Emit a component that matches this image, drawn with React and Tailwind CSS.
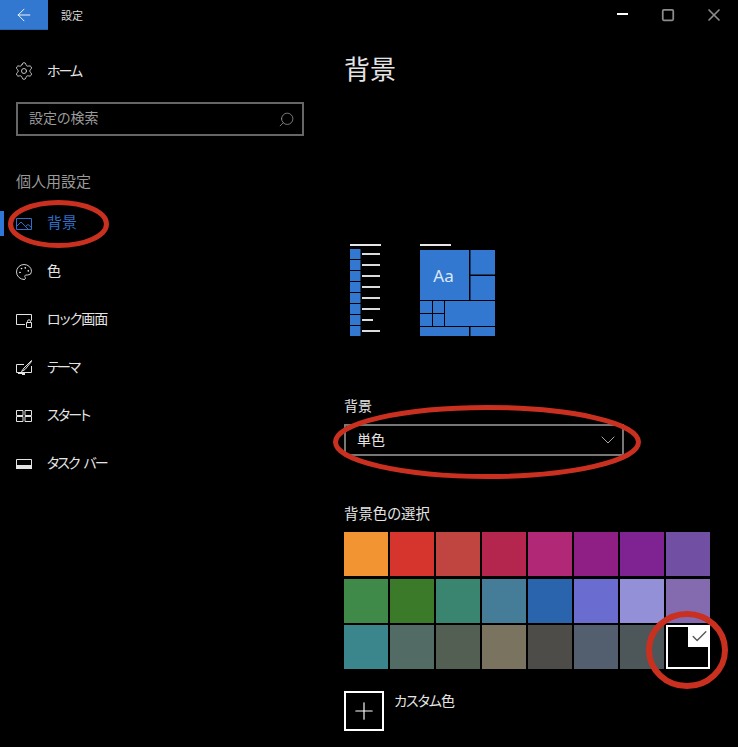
import { ArrowLeft, Settings, Search, Palette, ChevronDown, Plus, Check, X, Square } from "lucide-react";

const font = "font-['Noto_Sans_CJK_JP','Noto_Sans',sans-serif] [font-feature-settings:'palt']";

function ImageIcon() {
  return (
    <svg width="16" height="16" viewBox="0 0 16 16" fill="none" stroke="currentColor" strokeWidth="1">
      <path d="M.5 2.5h15v11H.5z" />
      <path d="M.5 10.5 5 6l7.5 7.5M9.5 10.5l2.5-2 3.5 3" />
    </svg>
  );
}

function LockIcon() {
  return (
    <svg width="16" height="16" viewBox="0 0 16 16" fill="none" stroke="currentColor" strokeWidth="1">
      <path d="M9 12.5H.5v-10h15v6" />
      <path d="M10.5 10.5h5v5h-5zM11.5 10.5V9.3a1.5 1.5 0 0 1 3 0v1.2" />
    </svg>
  );
}

function ThemeIcon() {
  return (
    <svg width="16" height="16" viewBox="0 0 16 16" fill="none" stroke="currentColor" strokeWidth="1">
      <path d="M8 4.5H.5v8h15V6" />
      <path d="M15.5 .5 8 8l-2.5 3.5L9 9.5l6.5-8z" />
      <path d="M2 12h7v3H6v-1H2z" fill="currentColor" stroke="none" />
    </svg>
  );
}

function StartIcon() {
  return (
    <svg width="16" height="16" viewBox="0 0 16 16" fill="none" stroke="currentColor" strokeWidth="1">
      <path d="M.5 2.5h6.5v5H.5zM9 2.5h6.5v5H9zM.5 8.5h6.5v5H.5zM9 8.5h6.5v5H9z" />
    </svg>
  );
}

function TaskbarIcon() {
  return (
    <svg width="16" height="16" viewBox="0 0 16 16" fill="none" stroke="currentColor" strokeWidth="1">
      <path d="M.5 3.5h15v8.5H.5z" />
      <path d="M0 9h16v4H0z" fill="currentColor" stroke="none" />
    </svg>
  );
}

const navItems = [
  { label: "背景", icon: <ImageIcon />, active: true, text: "text-[15px]" },
  { label: "色", icon: <Palette size={18} strokeWidth={1.2} className="-ml-px" />, text: "text-[14px]" },
  { label: "ロック画面", icon: <LockIcon />, text: "text-[14px] tracking-[-1px]" },
  { label: "テーマ", icon: <ThemeIcon />, text: "text-[14px] tracking-[-2.5px]" },
  { label: "スタート", icon: <StartIcon />, text: "text-[14px] tracking-[-1.75px]" },
  { label: "タスク バー", icon: <TaskbarIcon />, text: "text-[14px] tracking-[-2px] [word-spacing:4px]" },
];

const swatches = [
  "bg-[#f39433]", "bg-[#d6352e]", "bg-[#c04540]", "bg-[#b5264f]", "bg-[#b02876]", "bg-[#8f1f85]", "bg-[#7f2393]", "bg-[#7150a3]",
  "bg-[#3f8a48]", "bg-[#3a7a28]", "bg-[#3a8570]", "bg-[#457d99]", "bg-[#2a64ad]", "bg-[#6a6dcf]", "bg-[#9390d8]", "bg-[#846bb0]",
  "bg-[#3b858c]", "bg-[#526b64]", "bg-[#545f54]", "bg-[#7a735f]", "bg-[#4e4c48]", "bg-[#535f6e]", "bg-[#4d5658]",
];

function Preview() {
  const listRows = [0, 1, 2, 3, 4, 5, 6, 7];
  return (
    <svg width="151" height="92" viewBox="0 0 151 92" className="block">
      <rect x="6" y="0" width="31" height="2" fill="#e6e6e6" />
      <rect x="76" y="0" width="31" height="2" fill="#e6e6e6" />
      {listRows.map((i) => (
        <g key={i}>
          <rect x="6" y={5 + i * 11} width="10.5" height="10" fill="#3277d0" />
          <rect x="18" y={9 + i * 11} width={i === 6 ? 11 : 18} height="2" fill="#dcdcdc" />
        </g>
      ))}
      <g fill="#3277d0">
        <rect x="76" y="6" width="49" height="50" />
        <rect x="126.5" y="6" width="24.5" height="24.5" />
        <rect x="126.5" y="32" width="24.5" height="24" />
        <rect x="76" y="57" width="12" height="12" />
        <rect x="89" y="57" width="11" height="12" />
        <rect x="76" y="70" width="12" height="12" />
        <rect x="89" y="70" width="11" height="12" />
        <rect x="101" y="57" width="50" height="25" />
        <rect x="76" y="83" width="49" height="9" />
        <rect x="126.5" y="83" width="24.5" height="9" />
      </g>
      <text x="99.5" y="38" textAnchor="middle" fontSize="17" fill="#dbe8f8" fontFamily="'Noto Sans', sans-serif">Aa</text>
    </svg>
  );
}

export default function App() {
  return (
    <div className={`relative h-[747px] w-[738px] overflow-hidden bg-black text-[#e4e4e4] ${font}`}>
      {/* Title bar */}
      <div className="flex h-[30px] items-center">
        <div className="flex h-[30px] w-12 items-center justify-center border-b border-[#2a62ad] bg-[#3277d0]">
          <ArrowLeft size={20} strokeWidth={1.1} className="text-white" />
        </div>
        <span className="ml-[13px] text-[11px] text-[#d8d8d8]">設定</span>
        <div className="ml-auto mr-px flex text-[#8c8c8c]">
          <div className="flex h-[30px] w-[46px] items-center justify-center">
            <div className="mb-0.5 h-0.5 w-[11px] bg-white" />
          </div>
          <div className="flex h-[30px] w-[46px] items-center justify-center"><Square size={14} strokeWidth={3} /></div>
          <div className="flex h-[30px] w-[46px] items-center justify-center"><X size={20} strokeWidth={2} /></div>
        </div>
      </div>

      <div className="flex">
        {/* Sidebar */}
        <aside className="w-[320px] shrink-0">
          <div className="mt-[17px] flex h-12 items-center pl-4">
            <Settings size={20} strokeWidth={1} className="-ml-0.5 shrink-0" />
            <span className="-mt-0.5 ml-[13px] text-[14px] tracking-[-2px]">ホーム</span>
          </div>
          <div className="ml-4 mt-[7px] flex h-[34px] w-[288px] items-center justify-between border-2 border-[#666666] pl-[11px] pr-[7px]">
            <span className="-mt-1 text-[14px] text-[#9a9a9a]">設定の検索</span>
            <Search size={17} strokeWidth={1.1} className="-scale-x-100 text-[#999999]" />
          </div>
          <div className="ml-4 mt-[34px] h-[22px] text-[15px] leading-[22px] text-[#9a9a9a]">個人用設定</div>
          <nav className="mt-2">
            {navItems.map((item) => (
              <div key={item.label} className={`relative flex h-12 items-center pl-4 ${item.active ? "text-[#2f6fc4]" : ""}`}>
                {item.active && <div className="absolute left-0 top-[11px] h-[25px] w-1 bg-[#2f78d8]" />}
                <span className="w-4 shrink-0">{item.icon}</span>
                <span className={`-mt-1 ml-[15px] whitespace-pre ${item.text}`}>{item.label}</span>
              </div>
            ))}
          </nav>
        </aside>

        {/* Main */}
        <main className="flex-1 pl-6">
          <h1 className="mt-[18px] h-10 text-[26px] font-normal leading-10 text-[#e4e4e4]">背景</h1>
          <div className="mt-[156px]"><Preview /></div>
          <div className="mt-[59px] h-5 text-[14px] leading-5">背景</div>
          <div className="mt-[9px] flex h-8 w-[280px] items-center justify-between border-2 border-[#777777] pl-[11px] pr-0.5">
            <span className="-mt-0.5 text-[14px]">単色</span>
            <ChevronDown size={24} strokeWidth={1} className="text-[#aaaaaa]" />
          </div>
          <div className="mt-[47px] h-5 text-[14.4px] leading-5">背景色の選択</div>
          <div className="mt-[9px] grid w-[366px] grid-cols-[repeat(8,44px)] gap-x-0.5 gap-y-[2.5px]">
            {swatches.map((c, i) => (
              <div key={i} className={`h-11 ${c}`} />
            ))}
            <div className="relative h-11 border-2 border-white bg-black">
              <div className="absolute -right-0.5 -top-0.5 flex h-[22px] w-[22px] items-center justify-center bg-white">
                <Check size={19} strokeWidth={1.7} className="text-[#555555]" />
              </div>
            </div>
          </div>
          <div className="mt-[22px] flex gap-2.5">
            <div className="flex h-10 w-10 items-center justify-center border-2 border-white">
              <Plus size={28} strokeWidth={1} className="text-white" />
            </div>
            <span className="-mt-px text-[14px] leading-[20px] tracking-[-1px]">カスタム色</span>
          </div>
        </main>
      </div>

      {/* Red annotation rings */}
      <svg className="pointer-events-none absolute inset-0" width="738" height="747" fill="none" stroke="#c9301f">
        <ellipse cx="58.5" cy="224" rx="48" ry="21.5" strokeWidth="5" />
        <ellipse cx="487" cy="442" rx="151.5" ry="34.5" strokeWidth="5" />
        <ellipse cx="687" cy="650" rx="38" ry="36" strokeWidth="6" />
      </svg>
    </div>
  );
}
